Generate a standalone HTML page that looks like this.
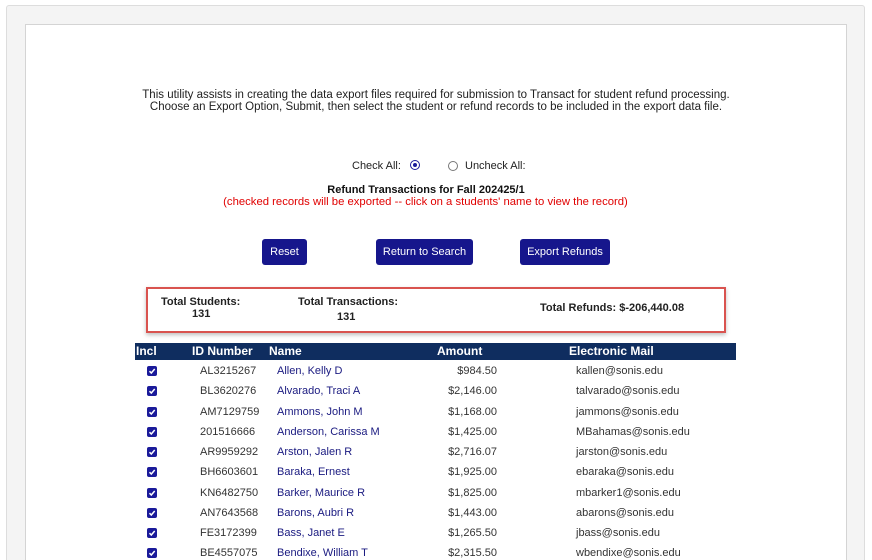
<!DOCTYPE html>
<html><head><meta charset="utf-8"><style>
*{margin:0;padding:0;box-sizing:border-box}
html,body{width:872px;height:560px;overflow:hidden}
body{background:#fff;font-family:"Liberation Sans",Arial,sans-serif;position:relative;color:#222}
.outer{position:absolute;left:6px;top:5px;width:859px;height:560px;background:#f4f4f4;border:1px solid #ddd;border-radius:3px}
.inner{position:absolute;left:25px;top:24px;width:822px;height:540px;background:#fff;border:1px solid #d4d4d4}
.a{position:absolute;white-space:nowrap}
.c{position:absolute;left:0;width:872px;text-align:center;white-space:nowrap}
.btn{position:absolute;top:239px;height:26px;background:#16168c;color:#fff;border-radius:3px;font-size:11px;line-height:26px;text-align:center}
.box{position:absolute;left:146px;top:287px;width:580px;height:46px;border:2px solid #d9534f;box-shadow:0 2px 4px rgba(0,0,0,.25);background:#fff}
.hdr{position:absolute;left:135px;top:343px;width:601px;height:17px;background:#0f2d5f;color:#fff;font-weight:bold;font-size:12px}
.row{position:absolute;left:0;width:872px;height:20px;font-size:11px;line-height:20px}
.cb{position:absolute;left:147px;top:5px;width:10px;height:10px;background:#1a1a9a;border-radius:2px}
.cb svg{position:absolute;left:1px;top:1px}
.id{position:absolute;left:200px;color:#333}
.nm{position:absolute;left:277px;color:#1a1a80}
.am{position:absolute;right:375px;color:#333}
.em{position:absolute;left:576px;color:#333}
</style></head><body>
<div class="outer"></div>
<div class="inner"></div>
<div class="c" style="top:89px;font-size:11.5px;line-height:12px">This utility assists in creating the data export files required for submission to Transact for student refund processing.<br>Choose an Export Option, Submit, then select the student or refund records to be included in the export data file.</div>
<div class="a" style="left:352px;top:160px;font-size:11px">Check All:</div>
<div class="a" style="left:410px;top:160px;width:10px;height:10px;border-radius:50%;border:1px solid #1a1a9a;"><div style="position:absolute;left:2px;top:2px;width:4px;height:4px;border-radius:50%;background:#1a1a9a"></div></div>
<div class="a" style="left:448px;top:161px;width:10px;height:10px;border-radius:50%;border:1px solid #777"></div>
<div class="a" style="left:465px;top:160px;font-size:11px">Uncheck All:</div>
<div class="c" style="top:184px;width:852px;font-size:11px;font-weight:bold;color:#111">Refund Transactions for Fall 202425/1</div>
<div class="c" style="top:196px;width:851px;font-size:11.3px;color:#e00000">(checked records will be exported -- click on a students' name to view the record)</div>
<div class="btn" style="left:262px;width:45px">Reset</div>
<div class="btn" style="left:376px;width:97px">Return to Search</div>
<div class="btn" style="left:520px;width:90px">Export Refunds</div>
<div class="box"></div>
<div class="a" style="left:161px;top:296px;font-size:11px;font-weight:bold">Total Students:</div>
<div class="a" style="left:192px;top:308px;font-size:11px;font-weight:bold">131</div>
<div class="a" style="left:298px;top:296px;font-size:11px;font-weight:bold">Total Transactions:</div>
<div class="a" style="left:337px;top:311px;font-size:11px;font-weight:bold">131</div>
<div class="a" style="left:540px;top:302px;font-size:11px;font-weight:bold">Total Refunds: $-206,440.08</div>
<div class="hdr"><span class="a" style="left:1px;top:1px">Incl</span><span class="a" style="left:57px;top:1px">ID Number</span><span class="a" style="left:134px;top:1px">Name</span><span class="a" style="left:302px;top:1px">Amount</span><span class="a" style="left:434px;top:1px">Electronic Mail</span></div>
<div class="row" style="top:361px"><div class="cb"><svg width="8" height="8"><path d="M1.5 4.2 L3.3 6 L6.7 2" stroke="#fff" stroke-width="1.5" fill="none"/></svg></div><span class="id">AL3215267</span><span class="nm">Allen, Kelly D</span><span class="am">$984.50</span><span class="em">kallen@sonis.edu</span></div>
<div class="row" style="top:381px"><div class="cb"><svg width="8" height="8"><path d="M1.5 4.2 L3.3 6 L6.7 2" stroke="#fff" stroke-width="1.5" fill="none"/></svg></div><span class="id">BL3620276</span><span class="nm">Alvarado, Traci A</span><span class="am">$2,146.00</span><span class="em">talvarado@sonis.edu</span></div>
<div class="row" style="top:402px"><div class="cb"><svg width="8" height="8"><path d="M1.5 4.2 L3.3 6 L6.7 2" stroke="#fff" stroke-width="1.5" fill="none"/></svg></div><span class="id">AM7129759</span><span class="nm">Ammons, John M</span><span class="am">$1,168.00</span><span class="em">jammons@sonis.edu</span></div>
<div class="row" style="top:422px"><div class="cb"><svg width="8" height="8"><path d="M1.5 4.2 L3.3 6 L6.7 2" stroke="#fff" stroke-width="1.5" fill="none"/></svg></div><span class="id">201516666</span><span class="nm">Anderson, Carissa M</span><span class="am">$1,425.00</span><span class="em">MBahamas@sonis.edu</span></div>
<div class="row" style="top:442px"><div class="cb"><svg width="8" height="8"><path d="M1.5 4.2 L3.3 6 L6.7 2" stroke="#fff" stroke-width="1.5" fill="none"/></svg></div><span class="id">AR9959292</span><span class="nm">Arston, Jalen R</span><span class="am">$2,716.07</span><span class="em">jarston@sonis.edu</span></div>
<div class="row" style="top:462px"><div class="cb"><svg width="8" height="8"><path d="M1.5 4.2 L3.3 6 L6.7 2" stroke="#fff" stroke-width="1.5" fill="none"/></svg></div><span class="id">BH6603601</span><span class="nm">Baraka, Ernest</span><span class="am">$1,925.00</span><span class="em">ebaraka@sonis.edu</span></div>
<div class="row" style="top:483px"><div class="cb"><svg width="8" height="8"><path d="M1.5 4.2 L3.3 6 L6.7 2" stroke="#fff" stroke-width="1.5" fill="none"/></svg></div><span class="id">KN6482750</span><span class="nm">Barker, Maurice R</span><span class="am">$1,825.00</span><span class="em">mbarker1@sonis.edu</span></div>
<div class="row" style="top:503px"><div class="cb"><svg width="8" height="8"><path d="M1.5 4.2 L3.3 6 L6.7 2" stroke="#fff" stroke-width="1.5" fill="none"/></svg></div><span class="id">AN7643568</span><span class="nm">Barons, Aubri R</span><span class="am">$1,443.00</span><span class="em">abarons@sonis.edu</span></div>
<div class="row" style="top:523px"><div class="cb"><svg width="8" height="8"><path d="M1.5 4.2 L3.3 6 L6.7 2" stroke="#fff" stroke-width="1.5" fill="none"/></svg></div><span class="id">FE3172399</span><span class="nm">Bass, Janet E</span><span class="am">$1,265.50</span><span class="em">jbass@sonis.edu</span></div>
<div class="row" style="top:543px"><div class="cb"><svg width="8" height="8"><path d="M1.5 4.2 L3.3 6 L6.7 2" stroke="#fff" stroke-width="1.5" fill="none"/></svg></div><span class="id">BE4557075</span><span class="nm">Bendixe, William T</span><span class="am">$2,315.50</span><span class="em">wbendixe@sonis.edu</span></div>
</body></html>
